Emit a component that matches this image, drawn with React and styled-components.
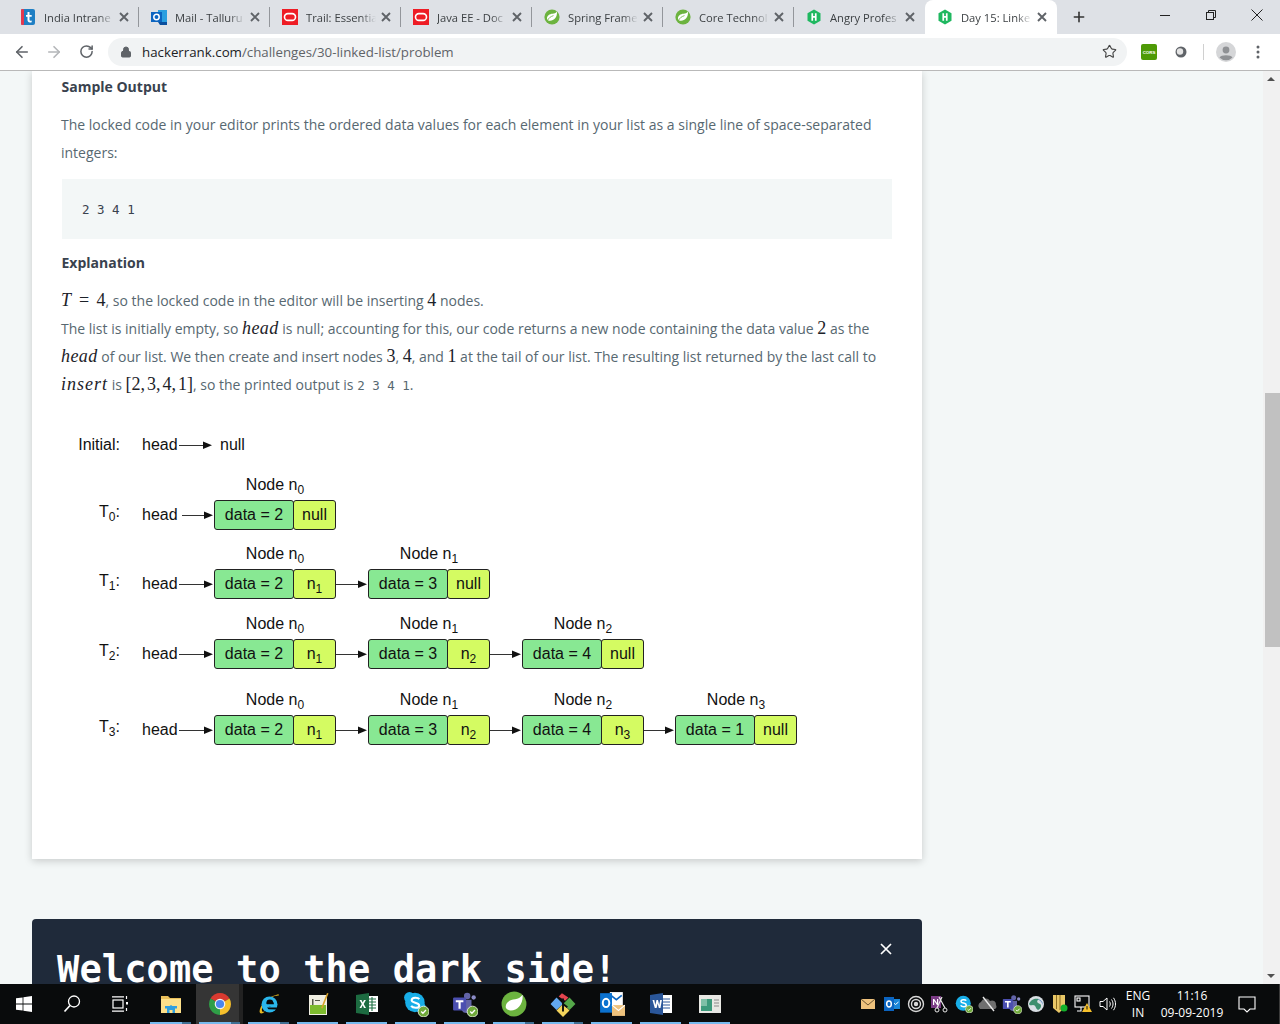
import React from "react";
import styled, { createGlobalStyle } from "styled-components";
import { ArrowLeft, ArrowRight, RotateCw, Lock, Star, Plus } from "lucide-react";

const GlobalStyle = createGlobalStyle`
  html, body {
    margin: 0;
    padding: 0;
    background: #f3f7f7;
  }
  * {
    box-sizing: border-box;
  }
`;

/* ---------- favicons ---------- */

const TeamFavicon = () => (
  <svg width="16" height="16" viewBox="0 0 16 16">
    <rect x="1" y="0" width="14" height="16" rx="2" fill="#1f7fc4" />
    <rect x="1" y="0" width="3" height="16" rx="1" fill="#e5384f" />
    <path d="M7.500 3h2v2.900h2.200v1.800H9.500v3.200c0 .8.900.9 2.200.5v1.800c-2.400.7-4.200.1-4.200-2.100V7.700H6V5.900h1.500z" fill="#fff" />
  </svg>
);

const OutlookFavicon = () => (
  <svg width="16" height="16" viewBox="0 0 16 16">
    <rect x="7" y="1" width="9" height="12" fill="#2a9fe0" />
    <path d="M7 13h9v3H9z" fill="#0a4f9e" />
    <rect x="0" y="3" width="11" height="10" fill="#0b64c0" />
    <circle cx="5.500" cy="8" r="2.700" fill="none" stroke="#fff" strokeWidth="1.500" />
  </svg>
);

const OracleFavicon = () => (
  <svg width="16" height="16" viewBox="0 0 16 16">
    <rect width="16" height="16" fill="#ee1c25" />
    <rect x="2.500" y="4.600" width="11" height="6.800" rx="3.400" fill="none" stroke="#fff" strokeWidth="1.600" />
  </svg>
);

const SpringFavicon = () => (
  <svg width="16" height="16" viewBox="0 0 16 16">
    <circle cx="8" cy="8" r="7.600" fill="#6cb33f" />
    <path d="M13 2.600c.3 5.800-2.800 9.200-7 9.200-1.300 0-2.400-.6-2.900-1.600C2.400 7 5.800 4.800 8.600 4.800c1.700 0 3.200-.8 4.400-2.200z" fill="#fff" />
    <path d="M3.500 11.600c1-2.600 3-4 6-5" stroke="#6cb33f" strokeWidth=".8" fill="none" />
  </svg>
);

const RankFavicon = () => (
  <svg width="16" height="16" viewBox="0 0 16 16">
    <path d="M8 .5l6.500 3.700v7.600L8 15.500 1.500 11.800V4.200z" fill="#1fb860" />
    <path d="M5.400 4.300h1.700v2.800h1.800V4.300h1.700v7.400H8.900V8.700H7.100v3H5.400z" fill="#fff" />
  </svg>
);

/* ---------- taskbar icons ---------- */

const WindowsIcon = () => (
  <svg width="16" height="16" viewBox="0 0 16 16">
    <path d="M0 2.300l6.600-.9v6.200H0zM7.400 1.300L16 0v7.600H7.400zM0 8.400h6.600v6.200L0 13.700zM7.400 8.400H16V16l-8.600-1.300z" fill="#fff" />
  </svg>
);

const SearchIcon = () => (
  <svg width="20" height="20" viewBox="0 0 20 20" fill="none" stroke="#fff" strokeWidth="1.300">
    <circle cx="12" cy="7.500" r="5.500" />
    <path d="M8 11.500l-5.500 6" strokeWidth="1.700" />
  </svg>
);

const TaskViewIcon = () => (
  <svg width="18" height="18" viewBox="0 0 18 18" fill="none" stroke="#fff" strokeWidth="1.200">
    <rect x="2" y="5" width="10" height="8" />
    <path d="M1 1.800h12M1 16.200h12" />
    <path d="M15.500 1v3M15.500 13v3" />
    <rect x="15" y="7" width="2" height="2.500" fill="#fff" stroke="none" />
  </svg>
);

const FolderIcon = () => (
  <svg width="24" height="24" viewBox="0 0 24 24">
    <path d="M2 4h7l2 2h11v3H2z" fill="#e9bf5a" />
    <rect x="2" y="7" width="20" height="14" fill="#fde08a" />
    <path d="M8 21v-5l4-3 4 3v5h-2.500v-3h-3v3z" fill="#2f9fe0" />
    <rect x="6" y="14" width="12" height="2.500" fill="#2f9fe0" />
  </svg>
);

const ChromeIcon = () => (
  <svg width="24" height="24" viewBox="0 0 24 24">
    <path d="M12 12L2.500 6.500A11 11 0 0 1 21.500 6.500z" fill="#d93a30" />
    <path d="M12 12l9.500-5.500A11 11 0 0 1 12 23z" fill="#f6c02c" />
    <path d="M12 12v11A11 11 0 0 1 2.500 6.500z" fill="#2f9e47" />
    <circle cx="12" cy="12" r="5.300" fill="#f3f3f3" />
    <circle cx="12" cy="12" r="4.100" fill="#4b86ee" />
  </svg>
);

const EdgeIcon = () => (
  <svg width="24" height="24" viewBox="0 0 24 24">
    <path d="M3 21c-2-3 4-14 13-17 3-1 6-2 6-1 0 1-3 0-7 2C9 8 4 15 5 19c.3 1 1.500 1 3 .5-2 2-4 2.500-5 1.500z" fill="#e8b921" />
    <circle cx="12.500" cy="12.500" r="8" fill="#2ab7ec" />
    <circle cx="12.800" cy="10.800" r="3.400" fill="#07090b" />
    <path d="M7 12h13v2H7z" fill="#2ab7ec" />
    <path d="M9.800 10.500h7v1.800h-7zM10 15.500h10.500l-1 2-8-.3z" fill="#07090b" />
  </svg>
);

const NotepadIcon = () => (
  <svg width="24" height="24" viewBox="0 0 24 24">
    <rect x="3" y="3" width="18" height="20" fill="#f0efe2" />
    <rect x="4" y="13" width="16" height="9" fill="#7dbb2e" />
    <path d="M6 7h1.500v6H6zM9 8h5v1H9z" fill="#55584a" />
    <path d="M15 16l6-15 1.500.5-6 15z" fill="#d8a22a" />
  </svg>
);

const ExcelIcon = () => (
  <svg width="24" height="24" viewBox="0 0 24 24">
    <rect x="11" y="4" width="12" height="16" fill="#fff" />
    <path d="M13 7h8M13 10h8M13 13h8M13 16h8M17 5v14" stroke="#1d7044" strokeWidth="1.100" />
    <path d="M1 3l13-2v22L1 21z" fill="#1d6b41" />
    <path d="M4.500 8h2l1.200 2.500L9 8h1.900l-2.200 4 2.300 4H9l-1.300-2.700L6.400 16H4.500l2.300-4z" fill="#fff" />
  </svg>
);

const CheckBadge = () => (
  <>
    <circle cx="19" cy="19" r="5" fill="#6fa93a" stroke="#eef3e2" strokeWidth=".8" />
    <path d="M16.800 19l1.600 1.600 2.800-3" stroke="#fff" strokeWidth="1.200" fill="none" />
  </>
);

const SkypeIcon = () => (
  <svg width="26" height="26" viewBox="0 0 24 24">
    <circle cx="6" cy="6" r="5" fill="#18aee8" />
    <circle cx="16" cy="15" r="5" fill="#18aee8" />
    <circle cx="11" cy="10.500" r="9" fill="#18aee8" />
    <path d="M15 7.500c-1-1.500-7-2-7 1 0 3 7 1.500 7 5 0 2.800-6 2.500-7.500.3" fill="none" stroke="#fff" strokeWidth="1.900" />
    <CheckBadge />
  </svg>
);

const TeamsIcon = () => (
  <svg width="26" height="26" viewBox="0 0 24 24">
    <circle cx="14" cy="4.500" r="3" fill="#6264a7" />
    <circle cx="20" cy="6" r="2" fill="#8b8cc7" />
    <path d="M9 8h9v9a5 5 0 0 1-9 1z" fill="#6264a7" />
    <rect x="1" y="6" width="12" height="12" rx="1" fill="#4b4fb0" />
    <path d="M3.500 8.500h7v1.800H8v6H6v-6H3.500z" fill="#fff" />
    <CheckBadge />
  </svg>
);

const SpringIcon = () => (
  <svg width="26" height="26" viewBox="0 0 24 24">
    <circle cx="12" cy="12" r="11.500" fill="#6cb33f" />
    <path d="M20 3.500c.5 9-4.500 14.500-11 14.500-2 0-3.800-1-4.500-2.500C3.500 11 8.500 7.500 13 7.500c2.700 0 5-1.500 7-4z" fill="#fff" />
  </svg>
);

const GitIcon = () => (
  <svg width="26" height="26" viewBox="0 0 24 24">
    <path d="M12 12l-6-6-5.500 6L6 17.500z" fill="#62a8f0" />
    <path d="M12 12l6-6 5.500 6-5.500 5.500z" fill="#55a84a" />
    <path d="M6 18l6-6 6 6-6 6z" fill="#f3d35b" />
    <path d="M8 5l3-3 6 4-3 3z" fill="#e4454f" />
    <path d="M12 7v12M12 12l4 3" stroke="#111" strokeWidth="1.800" />
  </svg>
);

const OutlookIcon = () => (
  <svg width="26" height="26" viewBox="0 0 24 24">
    <rect x="10" y="1" width="12" height="14" fill="#fff" />
    <path d="M11 4l5 4 5-4" fill="none" stroke="#0b64c0" strokeWidth="1.500" />
    <rect x="10" y="2" width="1.500" height="14" fill="#0b64c0" />
    <path d="M1 2h11v18H1z" fill="#0b72d0" />
    <ellipse cx="6.500" cy="11" rx="3" ry="3.800" fill="none" stroke="#fff" strokeWidth="1.800" />
    <rect x="12" y="13" width="12" height="10" fill="#eec27d" />
    <path d="M12 13l6 5 6-5" fill="none" stroke="#fff" strokeWidth="1" />
  </svg>
);

const WordIcon = () => (
  <svg width="24" height="24" viewBox="0 0 24 24">
    <rect x="10" y="3" width="13" height="18" fill="#fff" />
    <path d="M13 7h8M13 10h8M13 13h8M13 16h8" stroke="#2a5699" strokeWidth="1.200" />
    <path d="M1 3l13-2v22L1 21z" fill="#2a5699" />
    <path d="M3.500 8h1.800l1 5 1.200-5h1.500l1.200 5 1-5h1.700L11.500 16H9.800L8.700 11.500 7.600 16H5.800z" fill="#fff" />
  </svg>
);

const AppIcon = () => (
  <svg width="24" height="24" viewBox="0 0 24 24">
    <rect x="1" y="3" width="22" height="18" fill="#e8e8e4" />
    <rect x="3" y="7" width="11" height="12" fill="#3c9a7c" />
    <rect x="3" y="7" width="6" height="7" fill="#7fc0a8" />
    <path d="M16 8h5M16 11h5M16 14h5" stroke="#8a8a8a" strokeWidth="1.200" />
  </svg>
);

/* ---------- tray icons ---------- */

const TrayMail = () => (
  <svg width="16" height="16" viewBox="0 0 16 16">
    <rect x="1" y="3" width="14" height="10" fill="#eec27d" />
    <path d="M1 3l7 6 7-6" fill="none" stroke="#6a5330" strokeWidth="1" />
  </svg>
);

const TrayOutlook = () => (
  <svg width="18" height="18" viewBox="0 0 18 18">
    <rect x="8" y="4" width="9" height="10" fill="#1a86d8" />
    <path d="M9.500 7l3 2.500 3-2.500" stroke="#fff" fill="none" />
    <rect x="1" y="2" width="10" height="14" fill="#0b64c0" />
    <ellipse cx="6" cy="9" rx="2.300" ry="3" fill="none" stroke="#fff" strokeWidth="1.500" />
  </svg>
);

const TrayRings = () => (
  <svg width="18" height="18" viewBox="0 0 18 18" fill="none" stroke="#d8d8d8" strokeWidth="1.400">
    <circle cx="9" cy="9" r="7.500" />
    <circle cx="9" cy="9" r="4.500" />
    <circle cx="9" cy="9" r="1.500" fill="#d8d8d8" />
  </svg>
);

const TrayNote = () => (
  <svg width="18" height="18" viewBox="0 0 18 18">
    <rect x="0" y="1" width="10" height="12" fill="#7a3b85" />
    <path d="M2 10V4h1.200L6 8V4h1.200v6H6L3.200 6v4z" fill="#fff" />
    <path d="M11 2L6 13M8 2l6 11" stroke="#e8e8e8" strokeWidth="1.200" />
    <circle cx="6" cy="15" r="2" fill="none" stroke="#e8e8e8" />
    <circle cx="14" cy="15" r="2" fill="none" stroke="#e8e8e8" />
  </svg>
);

const TraySkype = () => (
  <svg width="18" height="18" viewBox="0 0 24 24">
    <circle cx="11" cy="11" r="10" fill="#18aee8" />
    <path d="M15 7.500c-1-1.500-7-2-7 1 0 3 7 1.500 7 5 0 2.800-6 2.500-7.500.3" fill="none" stroke="#fff" strokeWidth="2" />
    <CheckBadge />
  </svg>
);

const TrayCloud = () => (
  <svg width="20" height="18" viewBox="0 0 20 18">
    <path d="M2 14a4 4 0 0 1 1-7 5 5 0 0 1 9-1 4 4 0 0 1 6 4 3 3 0 0 1-1 4z" fill="#6f6f6f" />
    <path d="M5 2l11 14" stroke="#e8e8e8" strokeWidth="1.400" />
  </svg>
);

const TrayTeams = () => (
  <svg width="20" height="20" viewBox="0 0 24 24">
    <circle cx="14" cy="4.500" r="3" fill="#6264a7" />
    <circle cx="20" cy="6" r="2" fill="#8b8cc7" />
    <path d="M9 8h9v9a5 5 0 0 1-9 1z" fill="#6264a7" />
    <rect x="1" y="6" width="12" height="12" rx="1" fill="#4b4fb0" />
    <path d="M3.500 8.500h7v1.800H8v6H6v-6H3.500z" fill="#fff" />
    <CheckBadge />
  </svg>
);

const TrayGlobe = () => (
  <svg width="18" height="18" viewBox="0 0 18 18">
    <circle cx="9" cy="9" r="8" fill="#d9dfe4" />
    <path d="M2 9c2-5 6-6 10-5-3 2-2 4 1 5 2 1 1 5-2 6-3-2-2-5-5-5-2 0-3 1-4-1z" fill="#3d8f6e" />
    <path d="M10 4c3 0 6 3 6 6-1-3-3-5-6-6z" fill="#2d6fb8" />
  </svg>
);

const TrayShield = () => (
  <svg width="18" height="20" viewBox="0 0 18 20">
    <path d="M2 1h12v12l-6 6-6-5z" fill="#e9c767" />
    <path d="M5.500 1v14M9 1v15" stroke="#8b6d22" strokeWidth="1" />
    <circle cx="13" cy="14" r="3.500" fill="#12b12b" />
  </svg>
);

const TrayNetwork = () => (
  <svg width="20" height="20" viewBox="0 0 20 20" fill="none" stroke="#fff" strokeWidth="1.100">
    <rect x="1" y="2" width="14" height="11" />
    <rect x="3" y="4" width="3" height="3" />
    <path d="M7 13v4H3" />
    <path d="M13 9l5 9H8z" fill="#f6c02c" stroke="none" />
    <rect x="12.500" y="12" width="1" height="3.500" fill="#111" stroke="none" />
  </svg>
);

const TrayVolume = () => (
  <svg width="18" height="18" viewBox="0 0 18 18" fill="none" stroke="#fff" strokeWidth="1">
    <path d="M1 6.500h3L8 3v12l-4-3.500H1z" />
    <path d="M10.500 6.500c1 1.500 1 3.500 0 5M12.500 4.500c2 3 2 6 0 9M14.500 2.800c2.700 4 2.700 8.400 0 12.400" />
  </svg>
);

const NotifyIcon = () => (
  <svg width="18" height="18" viewBox="0 0 18 18" fill="none" stroke="#fff" strokeWidth="1.100">
    <path d="M1 2h16v12h-5l-3 3-3-3H1z" />
  </svg>
);

/* ---------- browser controls ---------- */

const CloseGlyph = () => (
  <svg width="10" height="10" viewBox="0 0 10 10" stroke="#5f6368" strokeWidth="1.900">
    <path d="M1 1l8 8M9 1l-8 8" />
  </svg>
);

const MinimizeGlyph = () => (
  <svg width="10" height="10" viewBox="0 0 10 10" stroke="#222" strokeWidth="1">
    <path d="M0 5.500h10" />
  </svg>
);

const RestoreGlyph = () => (
  <svg width="10" height="10" viewBox="0 0 10 10" fill="none" stroke="#222" strokeWidth="1">
    <rect x=".5" y="2.500" width="7" height="7" />
    <path d="M2.500 2.500v-2h7v7h-2" />
  </svg>
);

const WindowCloseGlyph = () => (
  <svg width="12" height="12" viewBox="0 0 12 12" stroke="#222" strokeWidth="1">
    <path d="M.5.500l11 11M11.500.500l-11 11" />
  </svg>
);

const CorsBadge = () => (
  <svg width="16" height="16" viewBox="0 0 16 16">
    <rect width="16" height="16" rx="2" fill="#4e9a06" />
    <text x="8" y="10" textAnchor="middle" fontFamily="Liberation Sans, sans-serif" fontSize="4.400" fontWeight="700" fill="#fff">CORS</text>
  </svg>
);

const RingBadge = () => (
  <svg width="14" height="14" viewBox="0 0 14 14" fill="none">
    <circle cx="7" cy="7" r="5.500" fill="#5f6368" />
    <circle cx="6" cy="6.500" r="3.200" fill="#e4e4e4" />
  </svg>
);

const AvatarIcon = () => (
  <svg width="20" height="20" viewBox="0 0 20 20">
    <circle cx="10" cy="10" r="10" fill="#d5d6d8" />
    <circle cx="10" cy="8" r="3.400" fill="#8f9194" />
    <path d="M3.500 15.500c1.500-3 11.500-3 13 0a9 9 0 0 1-13 0z" fill="#8f9194" />
  </svg>
);

const MenuDots = () => (
  <svg width="4" height="14" viewBox="0 0 4 14" fill="#5f6368">
    <circle cx="2" cy="2" r="1.500" />
    <circle cx="2" cy="7" r="1.500" />
    <circle cx="2" cy="12" r="1.500" />
  </svg>
);

const DialogClose = () => (
  <svg width="12" height="12" viewBox="0 0 12 12" stroke="#fff" strokeWidth="1.700">
    <path d="M1 1l10 10M11 1L1 11" />
  </svg>
);

const Arrow = ({ width, from = 0 }) => (
  <ArrowSvg width={width} height="10" viewBox={`0 0 ${width} 10`}>
    <path d={`M${from} 5.500H${width - 8}`} stroke="#333" strokeWidth="1" />
    <path d={`M${width - 10} 1.500L${width - 1} 5.200L${width - 10} 9z`} fill="#111" />
  </ArrowSvg>
);

/* ---------- data ---------- */

const tabs = [
  { title: "India Intrane", icon: <TeamFavicon />, sep: true },
  { title: "Mail - Talluru", icon: <OutlookFavicon />, sep: true },
  { title: "Trail: Essentia", icon: <OracleFavicon />, sep: true },
  { title: "Java EE - Doc", icon: <OracleFavicon />, sep: true },
  { title: "Spring Frame", icon: <SpringFavicon />, sep: true },
  { title: "Core Technol", icon: <SpringFavicon />, sep: true },
  { title: "Angry Profes", icon: <RankFavicon /> },
  { title: "Day 15: Linke", icon: <RankFavicon />, active: true },
];

const taskApps = [
  { icon: <FolderIcon />, split: true },
  { icon: <ChromeIcon />, split: true, active: true },
  { icon: <EdgeIcon />, split: true },
  { icon: <NotepadIcon /> },
  { icon: <ExcelIcon /> },
  { icon: <SkypeIcon /> },
  { icon: <TeamsIcon /> },
  { icon: <SpringIcon />, split: true },
  { icon: <GitIcon />, split: true },
  { icon: <OutlookIcon /> },
  { icon: <WordIcon /> },
  { icon: <AppIcon /> },
];

const trayIcons = [
  <TrayMail />,
  <TrayOutlook />,
  <TrayRings />,
  <TrayNote />,
  <TraySkype />,
  <TrayCloud />,
  <TrayTeams />,
  <TrayGlobe />,
  <TrayShield />,
  <TrayNetwork />,
  <TrayVolume />,
];

const steps = [
  { label: "0", gap: 14, from: 3, values: ["2"], next: [] },
  { label: "1", gap: 13, values: ["2", "3"], next: ["1"] },
  { label: "2", gap: 14, values: ["2", "3", "4"], next: ["1", "2"] },
  { label: "3", gap: 20, values: ["2", "3", "4", "1"], next: ["1", "2", "3"] },
];

const ListNode = ({ index, data, nextIndex }) => (
  <NodeColumn>
    <Caption>
      Node n<Sub>{index}</Sub>
    </Caption>
    <NodeBox>
      <DataCell>data = {data}</DataCell>
      <NextCell>
        {nextIndex ? (
          <>
            n<Sub>{nextIndex}</Sub>
          </>
        ) : (
          "null"
        )}
      </NextCell>
    </NodeBox>
  </NodeColumn>
);

const App = () => (
  <Screen>
    <GlobalStyle />
    <TabStrip>
      {tabs.map((tab) => (
        <Tab key={tab.title} $active={tab.active} $sep={tab.sep}>
          {tab.icon}
          <TabTitle>{tab.title}</TabTitle>
          <CloseGlyph />
        </Tab>
      ))}
      <NewTab>
        <Plus size={16} strokeWidth={2.4} color="#333" />
      </NewTab>
      <WindowControls>
        <WindowButton><MinimizeGlyph /></WindowButton>
        <WindowButton><RestoreGlyph /></WindowButton>
        <WindowButton><WindowCloseGlyph /></WindowButton>
      </WindowControls>
    </TabStrip>

    <Toolbar>
      <NavButton><ArrowLeft size={18} color="#5f6368" strokeWidth={2.2} /></NavButton>
      <NavButton><ArrowRight size={18} color="#b4b6b9" strokeWidth={2.2} /></NavButton>
      <NavButton><RotateCw size={15} color="#5f6368" strokeWidth={2.4} /></NavButton>
      <Omnibox>
        <Lock size={12} color="#5f6368" fill="#5f6368" strokeWidth={2} />
        <Url>
          hackerrank.com<UrlPath>/challenges/30-linked-list/problem</UrlPath>
        </Url>
        <Star size={15} color="#444" strokeWidth={1.8} />
      </Omnibox>
      <NavButton><CorsBadge /></NavButton>
      <NavButton><RingBadge /></NavButton>
      <ToolbarDivider />
      <NavButton><AvatarIcon /></NavButton>
      <NavButton><MenuDots /></NavButton>
    </Toolbar>

    <Viewport>
      <Page>
        <Card>
          <Heading>Sample Output</Heading>
          <Paragraph>
            The locked code in your editor prints the ordered data values for each element in your list as a single line of space-separated integers:
          </Paragraph>
          <CodeBlock>2 3 4 1</CodeBlock>
          <Heading $top={10}>Explanation</Heading>
          <Paragraph>
            <MathVar>T</MathVar><MathText $wordGap={3}> = 4</MathText>, so the locked code in the editor will be inserting <MathText>4</MathText> nodes.
            <br />
            The list is initially empty, so <MathVar>head</MathVar> is null; accounting for this, our code returns a new node containing the data value <MathText>2</MathText> as the <MathVar>head</MathVar> of our list. We then create and insert nodes <MathText>3</MathText>, <MathText>4</MathText>, and <MathText>1</MathText> at the tail of our list. The resulting list returned by the last call to <MathVar $wide>insert</MathVar> is <MathText $wordGap={-2.5}>[2, 3, 4, 1]</MathText>, so the printed output is <InlineCode>2 3 4 1</InlineCode>.
          </Paragraph>

          <Diagram>
            <DiagramRow $gap={30}>
              <RowLabel>Initial:</RowLabel>
              <HeadLabel>head</HeadLabel>
              <Arrow width={34} />
              <NullLabel>null</NullLabel>
            </DiagramRow>
            {steps.map((step) => (
              <DiagramRow key={step.label} $gap={step.gap}>
                <RowLabel $raised>
                  T<Sub>{step.label}</Sub>:
                </RowLabel>
                <HeadLabel>head</HeadLabel>
                <Arrow width={35} from={step.from || 0} />
                {step.values.map((value, i) => (
                  <React.Fragment key={i}>
                    {i > 0 && <Arrow width={i === 3 ? 31 : 32} />}
                    <ListNode index={i} data={value} nextIndex={step.next[i]} />
                  </React.Fragment>
                ))}
              </DiagramRow>
            ))}
          </Diagram>
        </Card>
        <DarkPanel>
          <DarkTitle>Welcome to the dark side!</DarkTitle>
          <DialogClose />
        </DarkPanel>
      </Page>
      <Scrollbar>
        <ScrollArrow $up />
        <ScrollTrack>
          <ScrollThumb />
        </ScrollTrack>
        <ScrollArrow />
      </Scrollbar>
    </Viewport>

    <Taskbar>
      <SystemButton><WindowsIcon /></SystemButton>
      <SystemButton><SearchIcon /></SystemButton>
      <SystemButton><TaskViewIcon /></SystemButton>
      <TaskList>
        {taskApps.map((app, i) => (
          <TaskButton key={i} $active={app.active} $split={app.split}>
            {app.icon}
          </TaskButton>
        ))}
      </TaskList>
      <Tray>
        {trayIcons.map((icon, i) => (
          <TraySlot key={i}>{icon}</TraySlot>
        ))}
      </Tray>
      <TrayText $width={44}>
        <span>ENG</span>
        <span>IN</span>
      </TrayText>
      <TrayText $width={64}>
        <span>11:16</span>
        <span>09-09-2019</span>
      </TrayText>
      <NotifyButton><NotifyIcon /></NotifyButton>
      <ShowDesktop />
    </Taskbar>
  </Screen>
);

export default App;

const Screen = styled.div`
  display: flex;
  flex-direction: column;
  width: 1280px;
  height: 1024px;
  overflow: hidden;
  font-family: "Open Sans", sans-serif;
`;

const TabStrip = styled.div`
  display: flex;
  flex: none;
  align-items: stretch;
  height: 34px;
  padding-left: 8px;
  background: #dee1e6;
`;

const Tab = styled.div`
  position: relative;
  display: flex;
  align-items: center;
  flex: none;
  width: ${(p) => (p.$active ? 132 : 131)}px;
  padding: 0 10px 0 12px;
  border-radius: 8px 8px 0 0;
  background: ${(p) => (p.$active ? "#fff" : "transparent")};

  &::after {
    content: "";
    display: ${(p) => (p.$sep ? "block" : "none")};
    position: absolute;
    right: 0;
    top: 7px;
    width: 1px;
    height: 20px;
    background: #93969b;
  }
`;

const TabTitle = styled.div`
  flex: 1;
  margin: 0 2px 0 8px;
  white-space: nowrap;
  font-size: 11.2px;
  color: #3c4043;
  mask-image: linear-gradient(to right, #000 74%, transparent 96%);
`;

const NewTab = styled.div`
  display: flex;
  align-items: center;
  justify-content: center;
  flex: none;
  width: 28px;
  margin-left: 8px;
`;

const WindowControls = styled.div`
  display: flex;
  margin-left: auto;
`;

const WindowButton = styled.div`
  display: flex;
  align-items: center;
  justify-content: center;
  width: 46px;
  height: 30px;
`;

const Toolbar = styled.div`
  display: flex;
  flex: none;
  align-items: center;
  height: 37px;
  padding: 0 6px 1px;
  background: #fff;
  border-bottom: 1px solid #b9b9b9;
`;

const NavButton = styled.div`
  display: flex;
  align-items: center;
  justify-content: center;
  flex: none;
  width: 32px;
  height: 28px;
`;

const Omnibox = styled.div`
  display: flex;
  align-items: center;
  flex: none;
  width: 1019px;
  height: 28px;
  margin: 0 6px;
  padding: 0 10px 0 12px;
  border-radius: 14px;
  background: #f1f3f4;
`;

const Url = styled.div`
  flex: 1;
  margin-left: 10px;
  font-size: 13.3px;
  color: #202124;
`;

const UrlPath = styled.span`
  color: #5f6368;
`;

const ToolbarDivider = styled.div`
  flex: none;
  width: 1px;
  height: 16px;
  margin: 0 6px;
  background: #d0d0d0;
`;

const Viewport = styled.div`
  display: flex;
  flex: 1;
  min-height: 0;
`;

const Page = styled.div`
  flex: 1;
  min-width: 0;
  padding-left: 32px;
  overflow: hidden;
  background: #f3f7f7;
`;

const Card = styled.div`
  display: flex;
  flex-direction: column;
  width: 890px;
  height: 788px;
  padding: 2px 30px 0;
  background: #fff;
  box-shadow: 0 2px 8px rgba(0, 0, 0, 0.18);
`;

const Heading = styled.div`
  margin: ${(p) => p.$top || 0}px 0 0 -0.5px;
  font-size: 14px;
  font-weight: 700;
  line-height: 28px;
  color: #39424e;
`;

const Paragraph = styled.div`
  margin: 10px 0 0 -1px;
  font-size: 14px;
  line-height: 28px;
  color: #576871;
`;

const CodeBlock = styled.div`
  display: flex;
  align-items: center;
  height: 60px;
  margin-top: 12px;
  padding-left: 20px;
  background: #f3f7f7;
  font-family: "DejaVu Sans Mono", monospace;
  font-size: 12.5px;
  color: #39424e;
`;

const InlineCode = styled.span`
  font-family: "DejaVu Sans Mono", monospace;
  font-size: 12.5px;
  color: #576871;
`;

const MathText = styled.span`
  font-family: "Liberation Serif", serif;
  font-size: 18px;
  line-height: 0;
  word-spacing: ${(p) => p.$wordGap || 0}px;
  color: #1c2229;
`;

const MathVar = styled(MathText)`
  font-style: italic;
  letter-spacing: ${(p) => (p.$wide ? 1 : 0.4)}px;
`;

const Diagram = styled.div`
  display: flex;
  flex-direction: column;
  font-family: "Liberation Sans", sans-serif;
  font-size: 16px;
  color: #111;
`;

const DiagramRow = styled.div`
  display: flex;
  align-items: flex-end;
  margin-top: ${(p) => p.$gap}px;
`;

const RowLabel = styled.div`
  flex: none;
  width: 58px;
  height: 30px;
  margin-right: 22px;
  line-height: ${(p) => (p.$raised ? 24 : 30)}px;
  text-align: right;
`;

const HeadLabel = styled.div`
  flex: none;
  width: 37px;
  height: 30px;
  line-height: 30px;
`;

const NullLabel = styled.div`
  height: 30px;
  margin-left: 7px;
  line-height: 30px;
`;

const ArrowSvg = styled.svg`
  flex: none;
  margin-bottom: 10px;
`;

const NodeColumn = styled.div`
  display: flex;
  flex: none;
  flex-direction: column;
  align-items: center;
  width: 122px;
`;

const Caption = styled.div`
  height: 22px;
  margin-bottom: 4px;
  line-height: 22px;
  white-space: nowrap;
`;

const Sub = styled.span`
  position: relative;
  top: 4px;
  font-size: 12px;
  line-height: 0;
`;

const NodeBox = styled.div`
  display: flex;
  width: 100%;
  height: 30px;
`;

const DataCell = styled.div`
  flex: none;
  width: 80px;
  border: 1px solid #222;
  border-radius: 3px;
  background: #88e893;
  line-height: 28px;
  text-align: center;
`;

const NextCell = styled.div`
  flex: 1;
  margin-left: -1px;
  border: 1px solid #222;
  border-radius: 3px;
  background: #d4fb62;
  line-height: 28px;
  text-align: center;
`;

const DarkPanel = styled.div`
  display: flex;
  justify-content: space-between;
  align-items: flex-start;
  width: 890px;
  height: 180px;
  margin-top: 60px;
  padding: 24px 30px 0 25px;
  border-radius: 4px 4px 0 0;
  background: #1f2a3a;
`;

const DarkTitle = styled.div`
  margin-top: 5px;
  font-family: "DejaVu Sans Mono", monospace;
  font-size: 37px;
  font-weight: 700;
  letter-spacing: 0.1px;
  line-height: 44px;
  color: #fff;
`;

const Scrollbar = styled.div`
  display: flex;
  flex: none;
  flex-direction: column;
  width: 17px;
  background: #f1f1f1;
`;

const ScrollArrow = styled.div`
  flex: none;
  width: 0;
  height: 0;
  margin: ${(p) => (p.$up ? "6px 4px 7px" : "7px 4px 6px")};
  border-left: 4.5px solid transparent;
  border-right: 4.5px solid transparent;
  ${(p) => (p.$up ? "border-bottom: 4px solid #505050;" : "border-top: 4px solid #505050;")}
`;

const ScrollTrack = styled.div`
  flex: 1;
  padding: 305px 0 0 2px;
`;

const ScrollThumb = styled.div`
  width: 15px;
  height: 254px;
  background: #c1c1c1;
`;

const Taskbar = styled.div`
  display: flex;
  flex: none;
  align-items: stretch;
  height: 40px;
  background: #090b0c;
`;

const SystemButton = styled.div`
  display: flex;
  align-items: center;
  justify-content: center;
  flex: none;
  width: 48px;
`;

const TaskList = styled.div`
  display: flex;
  margin-left: 2px;
`;

const TaskButton = styled.div`
  position: relative;
  display: flex;
  align-items: center;
  justify-content: center;
  flex: none;
  width: 49px;
  background: ${(p) =>
    p.$active
      ? "linear-gradient(to right, transparent 1px, #353535 1px, #353535 44px, #222 44px, #222 48px, transparent 48px)"
      : "transparent"};

  &::after {
    content: "";
    position: absolute;
    left: 4px;
    bottom: 0;
    width: 41px;
    height: 2px;
    background: ${(p) =>
      p.$split
        ? "linear-gradient(to right, #76b9ed 78%, #3f6f93 78%)"
        : "#76b9ed"};
  }
`;

const Tray = styled.div`
  display: flex;
  align-items: center;
  margin: 0 -4px 0 auto;
`;

const TraySlot = styled.div`
  display: flex;
  align-items: center;
  justify-content: center;
  flex: none;
  width: 24px;
`;

const TrayText = styled.div`
  display: flex;
  flex: none;
  flex-direction: column;
  align-items: center;
  justify-content: center;
  width: ${(p) => p.$width}px;
  font-size: 12px;
  line-height: 17px;
  color: #fff;
`;

const NotifyButton = styled.div`
  display: flex;
  align-items: center;
  justify-content: center;
  flex: none;
  width: 46px;
`;

const ShowDesktop = styled.div`
  flex: none;
  width: 10px;
  border-right: 1px solid #3a3a3a;
`;
